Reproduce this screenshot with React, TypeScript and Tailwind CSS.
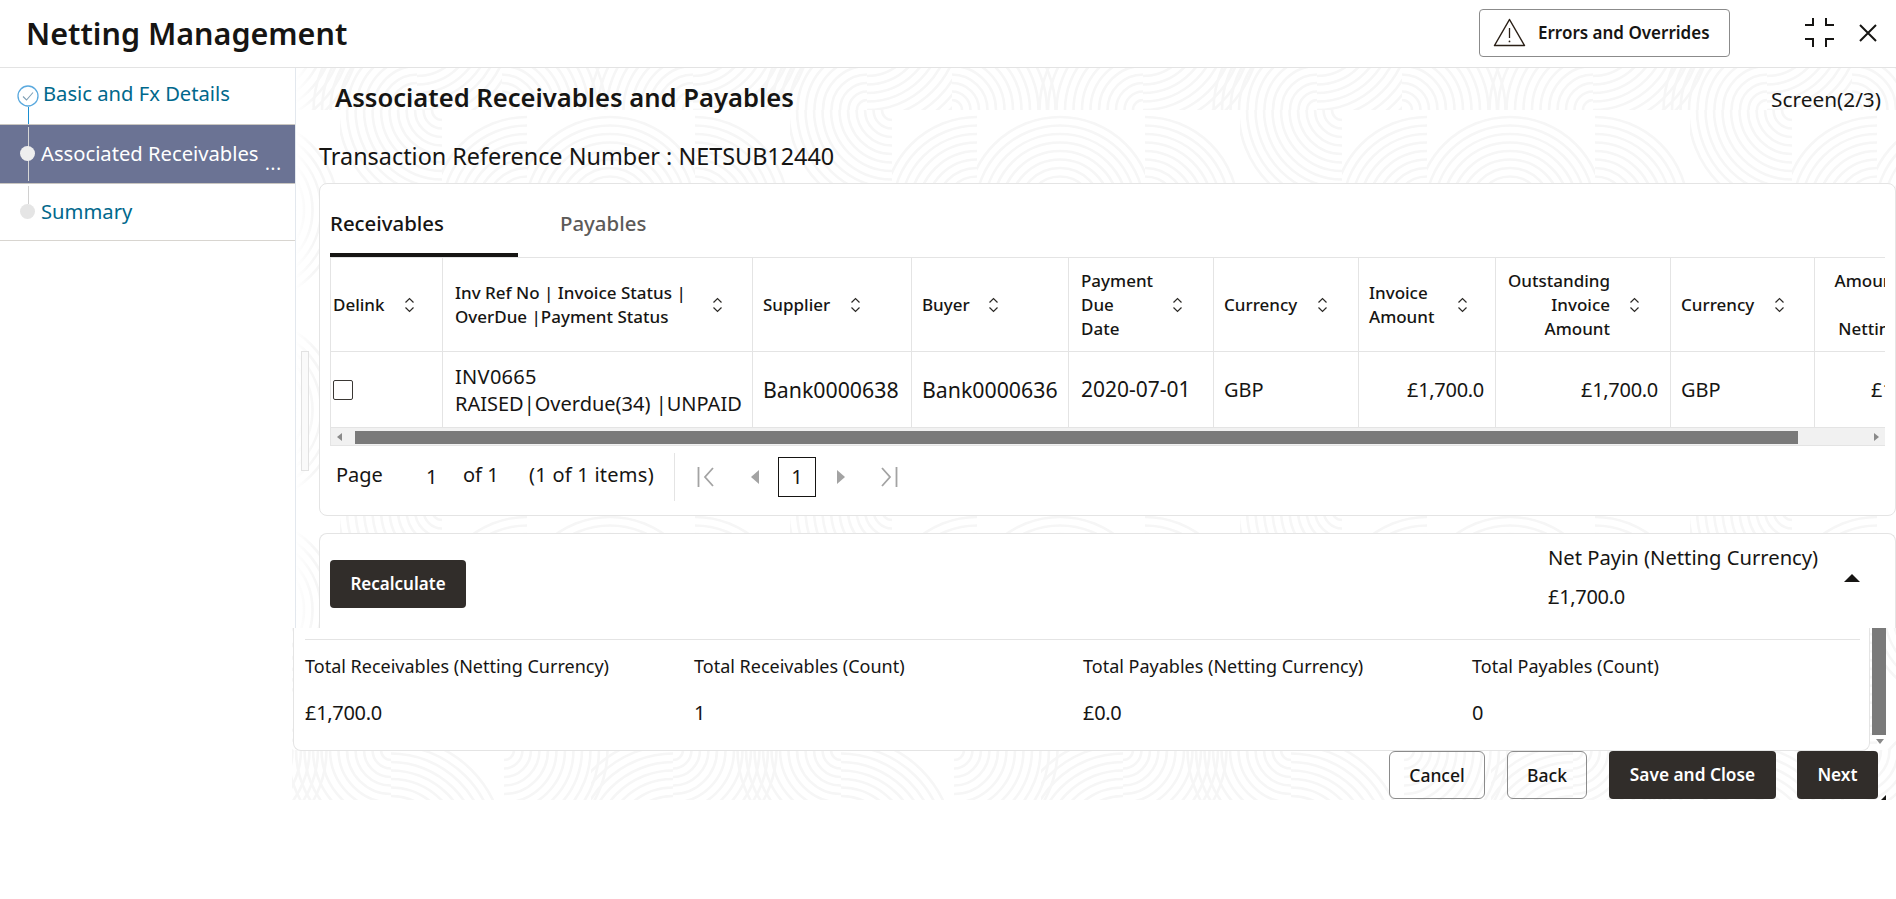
import React from "react";

const F = "font-['Noto_Sans','Open_Sans',sans-serif]";

function Rings({ x, y, w, h, cx, cy, rmin = 10, rmax = 110, step = 8.5 }: { x: number; y: number; w: number; h: number; cx: number; cy: number; rmin?: number; rmax?: number; step?: number }) {
  const rs: number[] = [];
  for (let r = rmin; r <= rmax; r += step) rs.push(r);
  return (
    <svg x={x} y={y} width={w} height={h} overflow="hidden">
      {rs.map((r) => (
        <circle key={r} cx={cx - x} cy={cy - y} r={r} fill="none" stroke="#f6f6f6" strokeWidth={2.6} />
      ))}
    </svg>
  );
}

function PatternBg() {
  return (
    <svg className="absolute left-0 top-0" width={1604} height={732} aria-hidden="true">
      <defs>
        <pattern id="rowA" patternUnits="userSpaceOnUse" x={401} y={0} width={450} height={42}>
          <Rings x={0} y={0} w={174} h={42} cx={0} cy={-42} rmin={50} rmax={118} />
          <Rings x={62} y={0} w={112} h={42} cx={174} cy={42} />
          <Rings x={174} y={0} w={85} h={42} cx={174} cy={-42} rmin={50} rmax={118} />
          <Rings x={259} y={0} w={191} h={42} cx={259} cy={42} />
          <Rings x={259} y={0} w={191} h={42} cx={450} cy={42} />
        </pattern>
        <pattern id="rowB" patternUnits="userSpaceOnUse" x={403} y={42} width={450} height={200}>
          <Rings x={0} y={0} w={197} h={200} cx={0} cy={100} rmin={8} rmax={100} />
          <Rings x={95} y={0} w={102} h={105} cx={197} cy={0} rmax={105} />
          <Rings x={197} y={0} w={85} h={200} cx={282} cy={100} rmin={8} rmax={100} />
          <Rings x={282} y={0} w={168} h={200} cx={365} cy={100} rmin={8} rmax={100} />
        </pattern>
        <pattern id="rowC" patternUnits="userSpaceOnUse" x={99} y={682} width={450} height={50}>
          <Rings x={0} y={0} w={113} h={50} cx={0} cy={100} rmin={20} rmax={118} />
          <Rings x={113} y={0} w={169} h={50} cx={113} cy={0} />
          <Rings x={200} y={0} w={82} h={50} cx={282} cy={100} rmin={20} rmax={118} />
          <Rings x={282} y={0} w={168} h={50} cx={282} cy={0} />
          <Rings x={282} y={0} w={168} h={50} cx={450} cy={0} />
        </pattern>
      </defs>
      <rect x={0} y={0} width={1604} height={42} fill="url(#rowA)" />
      <rect x={0} y={42} width={1604} height={640} fill="url(#rowB)" />
      <rect x={0} y={682} width={1604} height={50} fill="url(#rowC)" />
    </svg>
  );
}

function Sort() {
  return (
    <svg width="11" height="16" viewBox="0 0 11 16" fill="none" stroke="#2b2926" strokeWidth="1.2" className="shrink-0">
      <path d="M1.5 5.5 5.5 1.5 9.5 5.5" />
      <path d="M1.5 10.5 5.5 14.5 9.5 10.5" />
    </svg>
  );
}

const headers: { lines: string[]; cell: string; block: string }[] = [
  { lines: ["Delink"], cell: "pl-[2px] gap-[19px]", block: "" },
  { lines: ["Inv Ref No | Invoice Status |", "OverDue |Payment Status"], cell: "pl-[12px] gap-[26px]", block: "" },
  { lines: ["Supplier"], cell: "pl-[10px] gap-[20px]", block: "" },
  { lines: ["Buyer"], cell: "pl-[10px] gap-[18px]", block: "" },
  { lines: ["Payment", "Due", "Date"], cell: "pl-[12px] gap-[17px]", block: "w-[74px]" },
  { lines: ["Currency"], cell: "pl-[10px] gap-[20px]", block: "" },
  { lines: ["Invoice", "Amount"], cell: "pl-[10px] gap-[19px]", block: "w-[69px]" },
  { lines: ["Outstanding", "Invoice", "Amount"], cell: "pl-[10px] gap-[19px]", block: "w-[104px] text-right" },
  { lines: ["Currency"], cell: "pl-[10px] gap-[20px]", block: "" },
  { lines: ["Amount", "\u00a0", "Netting"], cell: "pl-[19px] gap-[18px]", block: "w-[66px] text-right" },
];

const cols = ["w-[112px]", "w-[310px]", "w-[159px]", "w-[157px]", "w-[145px]", "w-[145px]", "w-[137px]", "w-[175px]", "w-[144px]", "w-[146px]"];

const cellBase = "border-r border-b border-[#e4e4e4] p-0 align-middle text-[20px] leading-[27px] text-[#161513] font-normal whitespace-nowrap";

function Summary({ label, value }: { label: string; value: string }) {
  return (
    <div className="flex flex-col">
      <div className="text-[18px] leading-[24px] text-[#161513] whitespace-nowrap">{label}</div>
      <div className="mt-[23px] text-[20px] leading-[24px] tracking-[-0.3px] text-[#161513]">{value}</div>
    </div>
  );
}

export default function App() {
  return (
    <div className={`${F} w-[1896px] h-[899px] bg-white overflow-hidden text-[#161513]`}>
      {/* Header */}
      <header className="h-[68px] flex items-center border-b border-[#e3e3e3] pl-[26px] pb-[2px] relative z-20 bg-white">
        <h1 className="text-[30.5px] leading-[40px] font-semibold whitespace-nowrap">Netting Management</h1>
        <div className="ml-auto flex items-center">
          <button className="h-[48px] w-[251px] rounded-[4px] border border-[#8b8b8b] flex items-center pl-[13px] gap-[12px]">
            <svg width="33" height="29" viewBox="0 0 33 29" fill="none" stroke="#2b2017" strokeWidth="1.5">
              <path d="M16.5 1.5 1.5 27.5h30z" strokeLinejoin="round" />
              <path d="M16.5 10v10" strokeWidth="1.3" />
              <circle cx="16.5" cy="23.4" r=".9" fill="#2b2017" stroke="none" />
            </svg>
            <span className="text-[17px] font-semibold whitespace-nowrap">Errors and Overrides</span>
          </button>
          <svg className="ml-[74px]" width="31" height="31" viewBox="0 0 31 31" fill="none" stroke="#161513" strokeWidth="2">
            <path d="M1 8h8V1M30 8h-8V1M1 22h8v8M30 22h-8v8" />
          </svg>
          <svg className="ml-[24px] mr-[19px]" width="18" height="18" viewBox="0 0 18 18" fill="none" stroke="#161513" strokeWidth="2">
            <path d="M1 1l16 16M17 1 1 17" />
          </svg>
        </div>
      </header>

      <div className="flex">
        {/* Sidebar */}
        <aside className="w-[296px] h-[560px] shrink-0 bg-white border-r border-[#e3e8ee] relative z-10">
          <div className="h-[56px] relative flex items-center pl-[43px] pb-[6px]">
            <span className="text-[20.2px] text-[#00688c] whitespace-nowrap">Basic and Fx Details</span>
            <svg className="absolute left-[17px] top-[17px]" width="22" height="22" viewBox="0 0 22 22" fill="none">
              <circle cx="11" cy="11" r="10" stroke="#5aa9de" strokeWidth="1.3" />
              <path d="M6 11.5l3.5 3.5L16 7.5" stroke="#7f9fb5" strokeWidth="1.1" />
            </svg>
            <div className="absolute left-[28px] top-[39px] h-[17px] w-px bg-[#1d8fd1]" />
          </div>
          <div className="h-[60px] relative flex items-center pl-[41px] pb-[2px] bg-[#6b7394] border-y border-[#c9c6c0]">
            <span className="text-[20.2px] text-white whitespace-nowrap">Associated Receivables</span>
            <div className="absolute left-[28px] top-[2px] bottom-[2px] w-px bg-[#d6d6d6]" />
            <div className="absolute left-[20px] top-[21px] w-[15px] h-[15px] rounded-full bg-[#eeeeee]" />
            <span className="absolute left-[265px] top-[26px] text-[18px] leading-[24px] text-white tracking-[0.8px]">...</span>
          </div>
          <div className="h-[57px] relative flex items-center pl-[41px] pb-[2px] border-b border-[#d8d5d0]">
            <span className="text-[20.2px] text-[#00688c] whitespace-nowrap">Summary</span>
            <div className="absolute left-[28px] top-[2px] h-[18px] w-px bg-[#d0d0d0]" />
            <div className="absolute left-[20px] top-[20px] w-[15px] h-[15px] rounded-full bg-[#e5e5e5]" />
          </div>
        </aside>

        {/* Main */}
        <main className="relative ml-[-4px] w-[1604px] h-[732px] shrink-0">
          <PatternBg />
          <div className="absolute left-[4px] top-0 w-[18px] h-[560px] bg-gradient-to-r from-white to-transparent" />
          <div className="absolute left-[9px] top-[283px] w-[8px] h-[120px] border border-[#e2e2e2] bg-[#fafafa]" />

          <div className="relative">
            <div className="h-[60px] flex items-center justify-between pl-[43px] pr-[15px]">
              <h2 className="text-[25.6px] font-semibold whitespace-nowrap">Associated Receivables and Payables</h2>
              <span className="text-[20.8px] mt-[3px] whitespace-nowrap">Screen(2/3)</span>
            </div>
            <div className="h-[55px] flex items-center pl-[27px] pt-[2px] text-[23.4px] whitespace-nowrap">
              Transaction Reference Number : NETSUB12440
            </div>

            {/* Card 1 */}
            <section className="ml-[27px] w-[1577px] h-[333px] bg-white border border-[#e4e4e4] rounded-[8px] pl-[10px] pr-[10px]">
              <div className="flex h-[73px]">
                <div className="w-[188px] h-[73px] border-b-[4px] border-[#161513] flex items-center text-[20.4px] font-medium pt-[10px]">Receivables</div>
                <div className="pl-[42px] flex items-center text-[20.4px] font-medium text-[#5c5a58] pt-[6px]">Payables</div>
              </div>
              <div className="w-[1555px] overflow-hidden border-l border-t border-[#e4e4e4]">
                <table className="table-fixed border-separate border-spacing-0 w-[1630px]">
                  <colgroup>
                    {cols.map((c, i) => (
                      <col key={i} className={c} />
                    ))}
                  </colgroup>
                  <thead>
                    <tr className="h-[94px]">
                      {headers.map((h, i) => (
                        <th key={i} className="border-r border-b border-[#e4e4e4] p-0 font-medium">
                          <div className={`flex items-center ${h.cell}`}>
                            <div className={`text-[17px] leading-[24px] text-left whitespace-nowrap ${h.block}`}>
                              {h.lines.map((l, j) => (
                                <div key={j}>{l}</div>
                              ))}
                            </div>
                            <Sort />
                          </div>
                        </th>
                      ))}
                    </tr>
                  </thead>
                  <tbody>
                    <tr className="h-[76px]">
                      <td className={cellBase}>
                        <div className="ml-[2px] w-[20px] h-[20px] rounded-[2px] border-[1.5px] border-[#3a3734]" />
                      </td>
                      <td className={`${cellBase} pl-[12px]`}>
                        <div className="tracking-[0.3px]">INV0665</div>
                        <div>RAISED|Overdue(34) |UNPAID</div>
                      </td>
                      <td className={`${cellBase} pl-[10px] text-[21.3px]`}>Bank0000638</td>
                      <td className={`${cellBase} pl-[10px] text-[21.3px]`}>Bank0000636</td>
                      <td className={`${cellBase} pl-[12px] text-[21px]`}>2020-07-01</td>
                      <td className={`${cellBase} pl-[10px]`}>GBP</td>
                      <td className={`${cellBase} pr-[11px] text-right tracking-[-0.3px]`}>£1,700.0</td>
                      <td className={`${cellBase} pr-[12px] text-right tracking-[-0.3px]`}>£1,700.0</td>
                      <td className={`${cellBase} pl-[10px]`}>GBP</td>
                      <td className={`${cellBase} pl-[56px] tracking-[-0.3px]`}>£1,700.0</td>
                    </tr>
                  </tbody>
                </table>
                <div className="h-[18px] bg-[#f1f1f1] border-b border-[#e4e4e4] flex items-center relative">
                  <svg className="absolute left-[6px] top-[5px]" width="5" height="8" viewBox="0 0 5 8"><path d="M5 0v8L0 4z" fill="#8a8a8a" /></svg>
                  <div className="absolute left-[24px] top-[3px] w-[1443px] h-[13px] bg-[#7a7a7a]" />
                  <svg className="absolute right-[6px] top-[5px]" width="5" height="8" viewBox="0 0 5 8"><path d="M0 0v8l5-4z" fill="#8a8a8a" /></svg>
                </div>
              </div>
              {/* Pagination */}
              <div className="h-[71px] flex items-center pl-[6px] pb-[10px] text-[20px] whitespace-nowrap">
                <span className="w-[90px] -mt-[3px]">Page</span>
                <span className="w-[37px]">1</span>
                <span className="w-[66px] -mt-[3px]">of 1</span>
                <span className="w-[145px] -mt-[3px] tracking-[0.25px]">(1 of 1 items)</span>
                <div className="h-[48px] w-px bg-[#e4e4e4]" />
                <svg className="ml-[22px]" width="18" height="22" viewBox="0 0 18 22" fill="none" stroke="#a3a3a3" strokeWidth="1.8">
                  <path d="M1.5 1v20M16 2 8 11l8 9" />
                </svg>
                <svg className="ml-[36px]" width="8" height="14" viewBox="0 0 8 14"><path d="M8 0v14L0 7z" fill="#a3a3a3" /></svg>
                <div className="ml-[19px] w-[38px] h-[40px] border border-[#161513] flex items-center justify-center text-[20px]">1</div>
                <svg className="ml-[21px]" width="8" height="14" viewBox="0 0 8 14"><path d="M0 0v14l8-7z" fill="#a3a3a3" /></svg>
                <svg className="ml-[35px]" width="18" height="22" viewBox="0 0 18 22" fill="none" stroke="#a3a3a3" strokeWidth="1.8">
                  <path d="M16.5 1v20M2 2l8 9-8 9" />
                </svg>
              </div>
            </section>

            {/* Card 2 */}
            <section className="ml-[27px] mt-[17px] w-[1577px] h-[95px] bg-white border-x border-t border-[#e4e4e4] rounded-t-[8px] flex justify-between relative">
              <button className="ml-[10px] mt-[26px] w-[136px] h-[48px] rounded-[4px] bg-[#312d2a] text-white text-[17px] font-semibold">Recalculate</button>
              <div className="mr-[47px] w-[300px] mt-[9px]">
                <div className="text-[20.2px] leading-[28px] whitespace-nowrap">Net Payin (Netting Currency)</div>
                <div className="mt-[12px] text-[20px] leading-[28px] tracking-[-0.3px]">£1,700.0</div>
              </div>
              <svg className="absolute left-[1524px] top-[40px]" width="16" height="8" viewBox="0 0 16 8"><path d="M8 0l8 8H0z" fill="#161513" /></svg>
            </section>

            {/* Summary panel */}
            <section className="relative ml-[1px] w-[1577px] h-[123px] bg-white border-x border-b border-[#e4e4e4] rounded-b-[8px] pl-[11px] pr-[9px] pt-[11px]">
              <div className="h-px bg-[#e4e4e4]" />
              <div className="grid grid-cols-[389px_389px_389px_1fr] pt-[14px]">
                <Summary label="Total Receivables (Netting Currency)" value="£1,700.0" />
                <Summary label="Total Receivables (Count)" value="1" />
                <Summary label="Total Payables (Netting Currency)" value="£0.0" />
                <Summary label="Total Payables (Count)" value="0" />
              </div>
            </section>
            <div className="absolute left-[1580px] top-[560px] w-[14px] h-[107px] bg-[#7a7a7a]" />
            <svg className="absolute left-[1584px] top-[671px]" width="8" height="5" viewBox="0 0 8 5"><path d="M0 0h8L4 5z" fill="#8a8a8a" /></svg>

            {/* Footer buttons */}
            <div className="flex justify-end pr-[18px] gap-[22px] h-[48px]">
              <button className="w-[96px] h-[48px] rounded-[6px] border border-[#8b8b8b] text-[17.5px] font-medium">Cancel</button>
              <button className="w-[80px] h-[48px] rounded-[6px] border border-[#8b8b8b] text-[17.5px] font-medium">Back</button>
              <button className="w-[167px] h-[48px] rounded-[4px] bg-[#312d2a] text-white text-[17.3px] font-semibold">Save and Close</button>
              <button className="w-[81px] h-[48px] -ml-[1px] rounded-[4px] bg-[#312d2a] text-white text-[17.3px] font-semibold">Next</button>
            </div>
            <svg className="absolute left-[1589px] top-[727px]" width="5" height="5" viewBox="0 0 5 5"><path d="M5 0v5H0z" fill="#161513" /></svg>
          </div>
        </main>
      </div>
    </div>
  );
}
